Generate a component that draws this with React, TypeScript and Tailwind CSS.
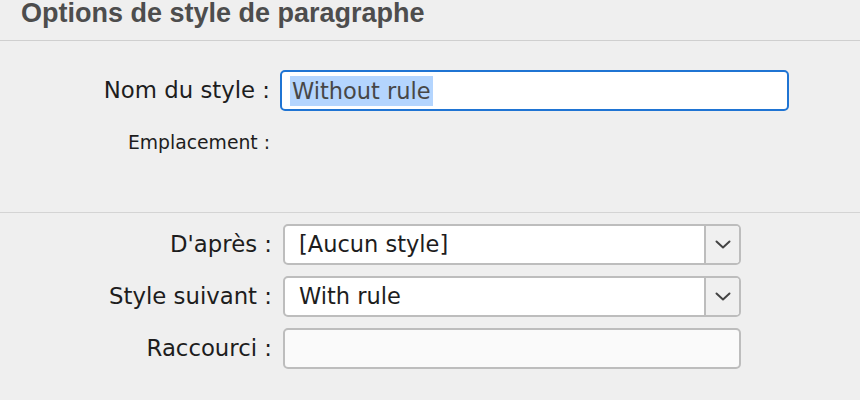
import React from 'react';

const label = "text-right text-[#1d1d1d] text-[22.8px] leading-none";

function Chevron() {
  return (
    <svg width="16" height="9" viewBox="0 0 16 9" fill="none">
      <path d="M1.5 1.5 L8 7.5 L14.5 1.5" stroke="#444" strokeWidth="2" strokeLinecap="round" strokeLinejoin="round" />
    </svg>
  );
}

function Select({ value }: { value: string }) {
  return (
    <div className="flex h-[41px] w-[458px] overflow-hidden rounded-[5px] border-2 border-[#bdbdbd] bg-white">
      <div className="flex flex-1 items-center pl-[14px] text-[22.5px] text-[#1d1d1d]">{value}</div>
      <div className="flex w-[35px] items-center justify-center border-l-2 border-[#bdbdbd] bg-[#f0f0f0]">
        <Chevron />
      </div>
    </div>
  );
}

export default function App() {
  return (
    <div
      className="h-[400px] w-[860px] overflow-hidden bg-[#efefef]"
      style={{ fontFamily: '"DejaVu Sans", sans-serif' }}
    >
      <div className="flex h-[41px] items-end border-b border-[#cfcfcf] px-[21px] pb-[13px]">
        <h1
          className="text-[27px] font-bold leading-none text-[#4d4d4d]"
          style={{ fontFamily: '"Liberation Sans", Arial, sans-serif' }}
        >
          Options de style de paragraphe
        </h1>
      </div>

      <div className="h-[172px] border-b border-[#d4d4d4] pt-[29px]">
        <div className="flex items-center">
          <div className={`w-[270px] ${label}`}>Nom du style :</div>
          <div className="ml-[10px] flex h-[41px] w-[509px] items-center rounded-[5px] border-2 border-[#1f74d3] bg-white pl-[8px]">
            <span className="bg-[#b4d5fe] px-[2px] py-[3px] text-[22.5px] leading-[24px] text-[#474747]">
              Without rule
            </span>
          </div>
        </div>
        <div className="mt-[23px] flex">
          <div className="w-[270px] text-right text-[18.8px] leading-none text-[#1d1d1d]">Emplacement :</div>
        </div>
      </div>

      <div className="flex flex-col gap-[11px] pt-[11px]">
        <div className="flex items-center">
          <div className={`w-[272px] ${label}`}>D'après :</div>
          <div className="ml-[11px]">
            <Select value="[Aucun style]" />
          </div>
        </div>
        <div className="flex items-center">
          <div className={`w-[272px] ${label}`}>Style suivant :</div>
          <div className="ml-[11px]">
            <Select value="With rule" />
          </div>
        </div>
        <div className="flex items-center">
          <div className={`w-[272px] ${label}`}>Raccourci :</div>
          <div className="ml-[11px] h-[41px] w-[458px] rounded-[5px] border-2 border-[#bdbdbd] bg-[#fafafa]" />
        </div>
      </div>
    </div>
  );
}
